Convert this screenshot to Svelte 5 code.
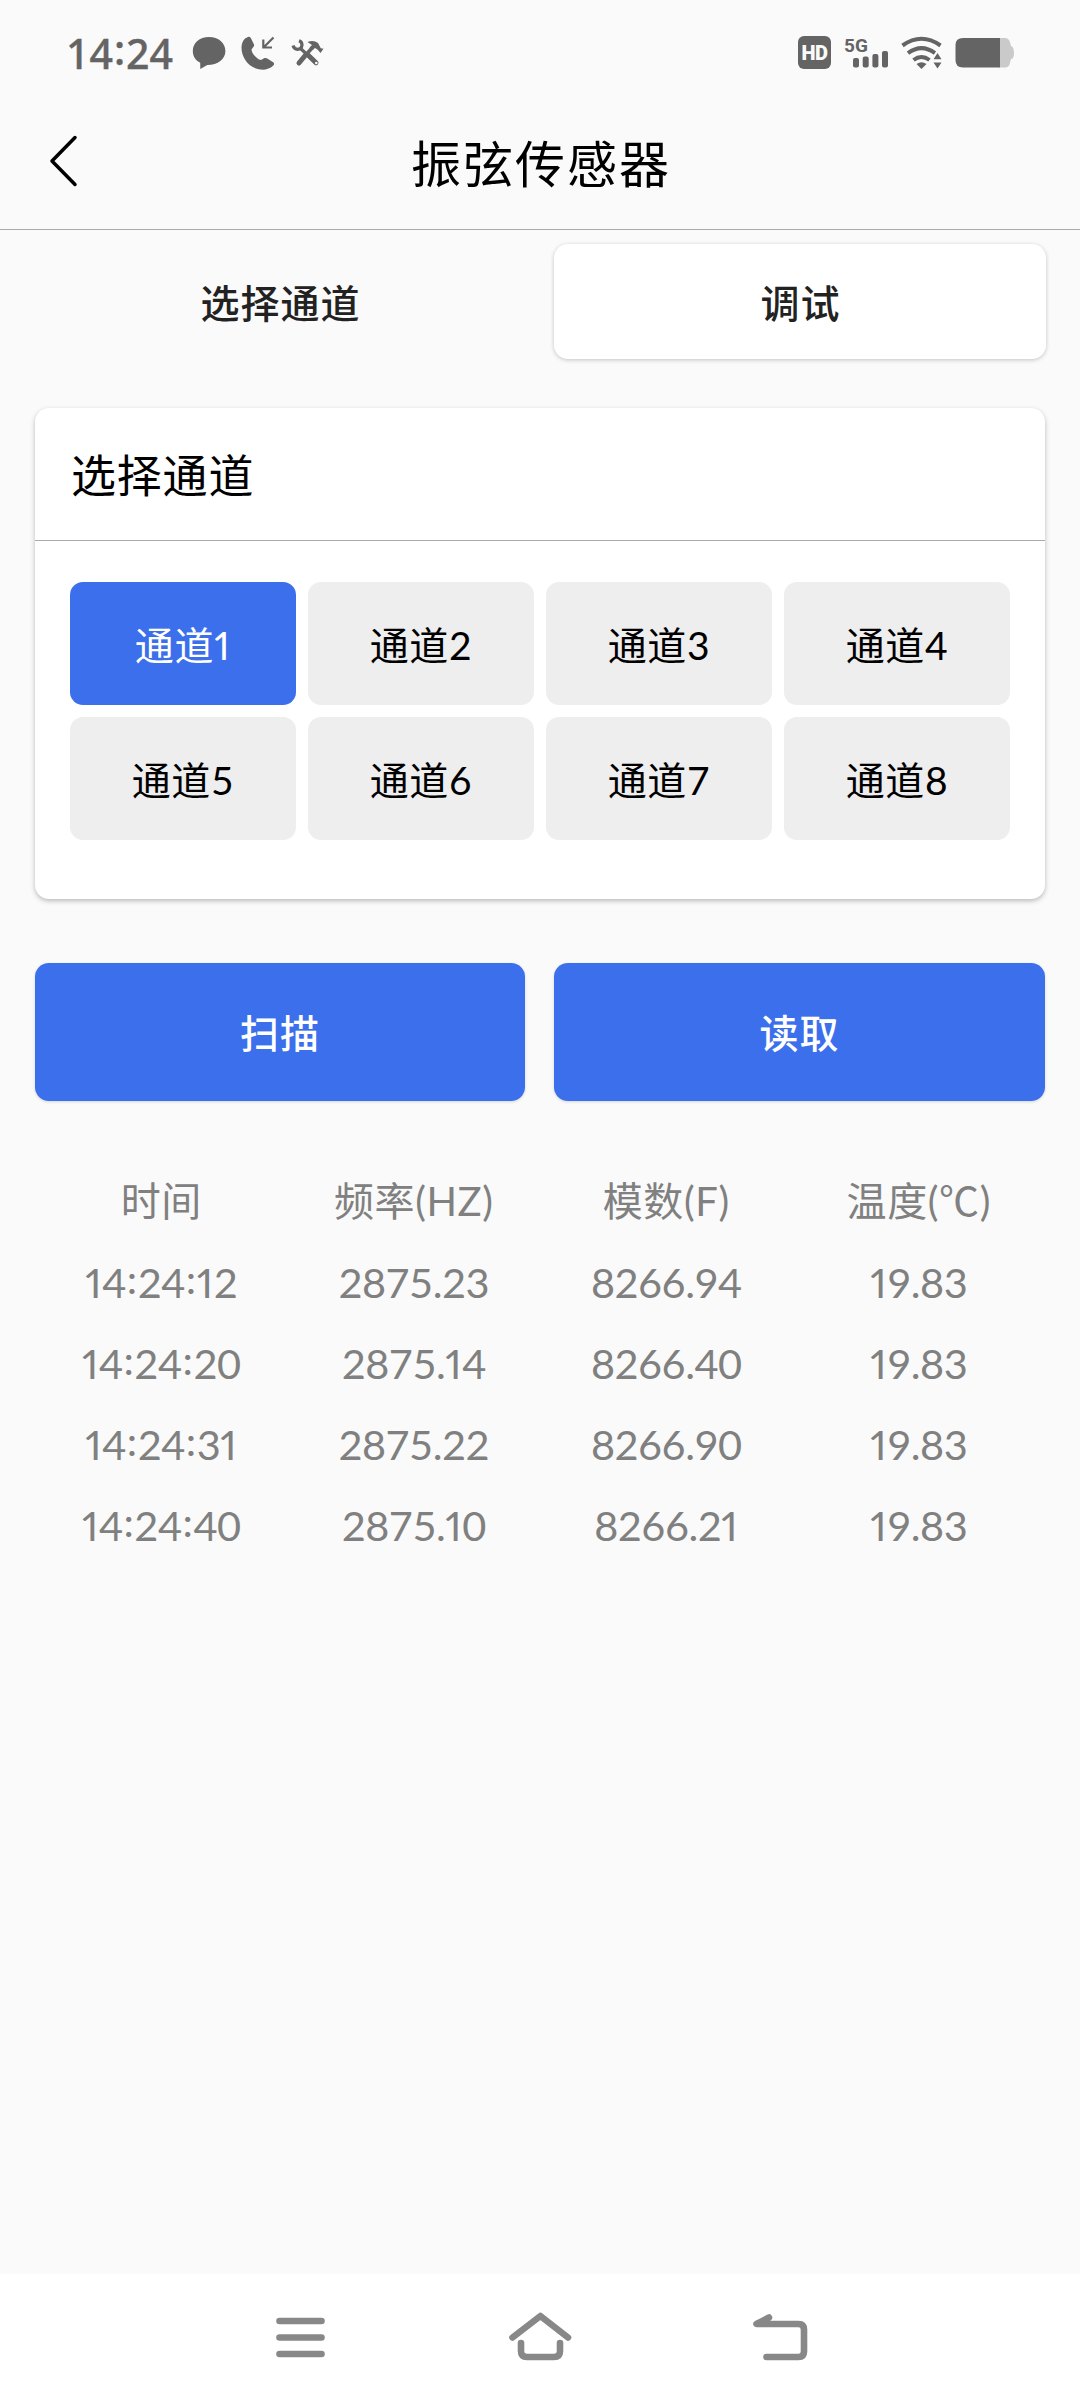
<script>
  const channels = [1, 2, 3, 4, 5, 6, 7, 8];
  const headings = ['时间', '频率(HZ)', '模数(F)', '温度(℃)'];
  const readings = [
    ['14:24:12', '2875.23', '8266.94', '19.83'],
    ['14:24:20', '2875.14', '8266.40', '19.83'],
    ['14:24:31', '2875.22', '8266.90', '19.83'],
    ['14:24:40', '2875.10', '8266.21', '19.83']
  ];
  let selected = $state(1);
</script>

<!-- Narrow ones and vertically centred colons -->
{#snippet figures(text)}
  {#each String(text).split(/([1:])/) as part}{#if part === '1'}<span class="one">1</span>{:else if part === ':'}<span class="colon">:</span>{:else}{part}{/if}{/each}
{/snippet}

<div class="screen">
  <div class="status">
    <span class="clock">14<span class="colon">:</span>24</span>
    <svg class="bubble" width="34" height="34" viewBox="0 0 34 34">
      <path d="M17 1C7.500 1 .8 7 .8 15c0 5.200 2.800 9.400 7.400 11.800L8.300 33l7-4C26 29 33.400 23 33.400 15 33.400 7 26.500 1 17 1Z" />
    </svg>
    <svg class="phone" width="34" height="34" viewBox="0 0 34 34">
      <path d="M4 2.500 7.500.8Q9 .6 9.800 2L13 8.500Q13.500 10 12.300 11L10.500 13.500Q11 18.500 17.500 23.300L20 24 23.500 22Q25 21.600 26.300 22.600L32.500 26.500Q33.500 27.500 32.800 29C29 33.200 24 34 19 33.500 8 32 .5 22 .5 11.500 .6 8 1.500 5 4 2.500Z" />
      <path class="line" d="M32.500 1.500 23 11M22.300 3.500V11.500H31" stroke-width="2.200" />
    </svg>
    <svg class="tools" width="34" height="28" viewBox="0 0 34 28">
      <path class="line" d="M2 6.500Q3 10 6.500 10.300 10.500 10.300 11 6 11 2.800 8 1.800" stroke-width="3.200" />
      <path class="line" d="M9.500 9.500 15 14.500" stroke-width="3.200" />
      <path class="line" d="M17.500 16.500 25 23.700" stroke-width="5" stroke-linecap="round" />
      <path class="line" d="M21.500 8.500 16.500 14" stroke-width="3.600" />
      <path class="line" d="M15 15.500 8 24" stroke-width="5" stroke-linecap="round" />
      <path d="M16.500 3Q22.500.5 27 4L29.800 9.300 32.500 9.800 29.500 14 26.500 10.500 24 9 21.500 11 18.500 8.500 21 6Z" />
      <circle class="hole" cx="25.300" cy="24" r="1.300" />
    </svg>
    <span class="spacer"></span>
    <span class="hd">HD</span>
    <svg class="signal" width="48" height="46" viewBox="-2 -6 48 46">
      <text x="0" y="15.800">5G</text>
      <rect x="9" y="22" width="6" height="9.500" rx="2" />
      <rect x="18.700" y="20.500" width="6" height="11" rx="2" />
      <rect x="28.400" y="18" width="6" height="13.500" rx="2" />
      <rect x="38" y="15" width="6" height="16.500" rx="2" />
    </svg>
    <svg class="wifi" width="42" height="34" viewBox="0 0 42 34">
      <path class="line" d="M1.500 9.500Q20.500-4 39.500 9.500M7 17.200Q20.500 7 34 17.200M12.500 24Q20.500 18 28.500 24" stroke-width="4" />
      <path d="M15.500 28Q20.500 24.500 25.500 28L20.500 33Z" />
      <path class="cutout" d="M36.500 13 44 23V34H31V23Z" />
      <path d="M36.500 17 40.500 23.200H32.500ZM36.500 32.500 40.500 26.500H32.500Z" />
    </svg>
    <svg class="battery" width="60" height="32" viewBox="0 0 60 32">
      <path class="pale" d="M44 1H50Q54 1 55 5.500L56 9Q59 10 59 16T56 22L55 26Q54 30.500 50 30.500H44Z" />
      <path d="M45 1V30.500H8Q.5 30.500.5 23V8Q.5 1 8 1Z" />
    </svg>
  </div>

  <header>
    <svg class="back" width="34" height="56" viewBox="0 0 34 56">
      <path d="M29 4.500 6 28 29 51.500" />
    </svg>
    <h1>振弦传感器</h1>
  </header>

  <main>
    <nav class="tabs">
      <button class="tab">选择通道</button>
      <button class="tab active">调试</button>
    </nav>

    <section class="card">
      <h2>选择通道</h2>
      <div class="grid">
        {#each channels as n}
          <button class="channel" class:chosen={selected === n} onclick={() => (selected = n)}>通道{@render figures(n)}</button>
        {/each}
      </div>
    </section>

    <div class="actions">
      <button>扫描</button>
      <button>读取</button>
    </div>

    <div class="table">
      {#each headings as h}<div class="th">{h}</div>{/each}
      {#each readings as row}
        {#each row as value}<div class="td">{@render figures(value)}</div>{/each}
      {/each}
    </div>
  </main>

  <footer>
    <svg width="52" height="42" viewBox="0 0 52 42">
      <path d="M3.500 5H45.500M3.500 21.500H45.500M3.500 38H45.500" />
    </svg>
    <svg width="66" height="52" viewBox="0 0 66 52">
      <path d="M5.500 26.500 33.400 5 61 26.500M14 32V40Q14 46 20 46H47Q53 46 53 40V32" />
    </svg>
    <svg width="56" height="52" viewBox="0 0 56 52">
      <path d="M17 6.500 4.500 13H46.500Q52 13 52 18.500V40.500Q52 46 46.500 46H14.500" />
    </svg>
  </footer>
</div>

<style>
  :global(body) {
    background: #fafafa;
  }
  .screen {
    width: 1080px;
    height: 2400px;
    display: flex;
    flex-direction: column;
    background: #fafafa;
    color: #000;
    font-family: Lato, 'Noto Sans CJK SC', sans-serif;
    overflow: hidden;
  }
  button {
    border: 0;
    margin: 0;
    padding: 0;
    font: inherit;
    color: inherit;
    background: none;
  }
  .one {
    font-variant-numeric: proportional-nums;
    margin-right: 1px;
  }
  .colon {
    line-height: 1;
    vertical-align: 4px;
    margin: 0 1px;
  }
  .status {
    height: 107px;
    box-sizing: border-box;
    padding: 0 65px 2px 66px;
    display: flex;
    align-items: center;
    color: #646464;
    fill: #646464;
  }
  .status > * {
    flex: none;
  }
  .status .spacer {
    flex: 1;
  }
  .clock {
    font: 500 41px/50px 'Noto Sans', sans-serif;
    width: 126px;
    -webkit-text-stroke: 0.4px #646464;
  }
  .phone {
    margin-left: 15px;
  }
  .tools {
    margin-left: 16px;
  }
  .line {
    fill: none;
    stroke: #646464;
  }
  .hole,
  .cutout {
    fill: #fafafa;
  }
  .hd {
    width: 33px;
    height: 33px;
    border-radius: 6px;
    background: #646464;
    color: #fafafa;
    font: 900 20px/34px Roboto, sans-serif;
    letter-spacing: -0.5px;
    text-align: center;
  }
  .signal {
    margin-left: 11px;
  }
  .signal text {
    font: 700 19px Roboto, sans-serif;
  }
  .wifi {
    margin-left: 11px;
  }
  .battery {
    margin-left: 12px;
  }
  .status svg {
    padding-top: 1px;
  }
  .pale {
    fill: #cacaca;
  }
  header {
    height: 123px;
    box-sizing: border-box;
    border-bottom: 1px solid #aaa;
    display: grid;
    grid-template-columns: 46px 1fr 46px;
    padding-bottom: 14px;
    align-items: center;
  }
  .back {
    margin-left: 46px;
  }
  .back path {
    fill: none;
    stroke: #000;
    stroke-width: 3.500;
    stroke-linecap: round;
    stroke-linejoin: round;
  }
  h1 {
    margin: 0;
    padding-top: 5px;
    font-size: 50px;
    font-weight: 400;
    line-height: 60px;
    letter-spacing: 2px;
    text-indent: 2px;
    text-align: center;
  }
  main {
    flex: 1;
    padding: 14px 35px 0;
  }
  .tabs {
    display: grid;
    grid-template-columns: 490px 492px;
    gap: 29px;
    width: 1011px;
    height: 115px;
    color: #222;
  }
  .tab {
    font: 500 39px 'Noto Sans CJK SC', sans-serif;
    letter-spacing: 1px;
    text-indent: 1px;
    border-radius: 14px;
    padding-bottom: 2px;
  }
  .active {
    background: #fff;
    box-shadow: 0 1px 4px rgba(0, 0, 0, 0.22);
  }
  .card {
    margin-top: 49px;
    height: 491px;
    border-radius: 14px;
    background: #fff;
    box-shadow: 0 2px 5px rgba(0, 0, 0, 0.26);
  }
  h2 {
    margin: 0;
    height: 133px;
    box-sizing: border-box;
    border-bottom: 1px solid #aaa;
    padding-left: 36px;
    font-size: 45px;
    font-weight: 400;
    line-height: 136px;
    letter-spacing: 0.800px;
  }
  .grid {
    display: grid;
    grid-template-columns: repeat(4, 226px);
    grid-auto-rows: 123px;
    gap: 12px;
    padding: 41px 35px 0;
  }
  .channel {
    border-radius: 13px;
    background: #eee;
    font-size: 39px;
    letter-spacing: 0.700px;
    padding-bottom: 2px;
  }
  .chosen {
    background: #3b6fec;
    color: #fff;
  }
  .actions {
    margin-top: 64px;
    display: grid;
    grid-template-columns: 490px 491px;
    gap: 29px;
    height: 138px;
  }
  .actions button {
    border-radius: 14px;
    background: #3b6fec;
    color: #fff;
    font: 500 39px 'Noto Sans CJK SC', sans-serif;
    letter-spacing: 1px;
    padding-bottom: 3px;
    box-shadow: 0 1px 3px rgba(0, 0, 0, 0.15);
  }
  .table {
    margin-top: 60px;
    display: grid;
    grid-template-columns: repeat(4, 1fr);
    grid-auto-rows: 81px;
    text-align: center;
    color: #808080;
    line-height: 81px;
  }
  .th {
    font-size: 40px;
    letter-spacing: 0.600px;
  }
  .td {
    font-size: 41.5px;
    letter-spacing: -0.500px;
  }
  footer {
    height: 126px;
    background: #fff;
    display: flex;
    justify-content: center;
    gap: 179px;
    padding-left: 4px;
    align-items: center;
  }
  footer svg {
    fill: none;
    stroke: #888;
    stroke-width: 6.600;
    stroke-linecap: round;
    stroke-linejoin: round;
  }
</style>
